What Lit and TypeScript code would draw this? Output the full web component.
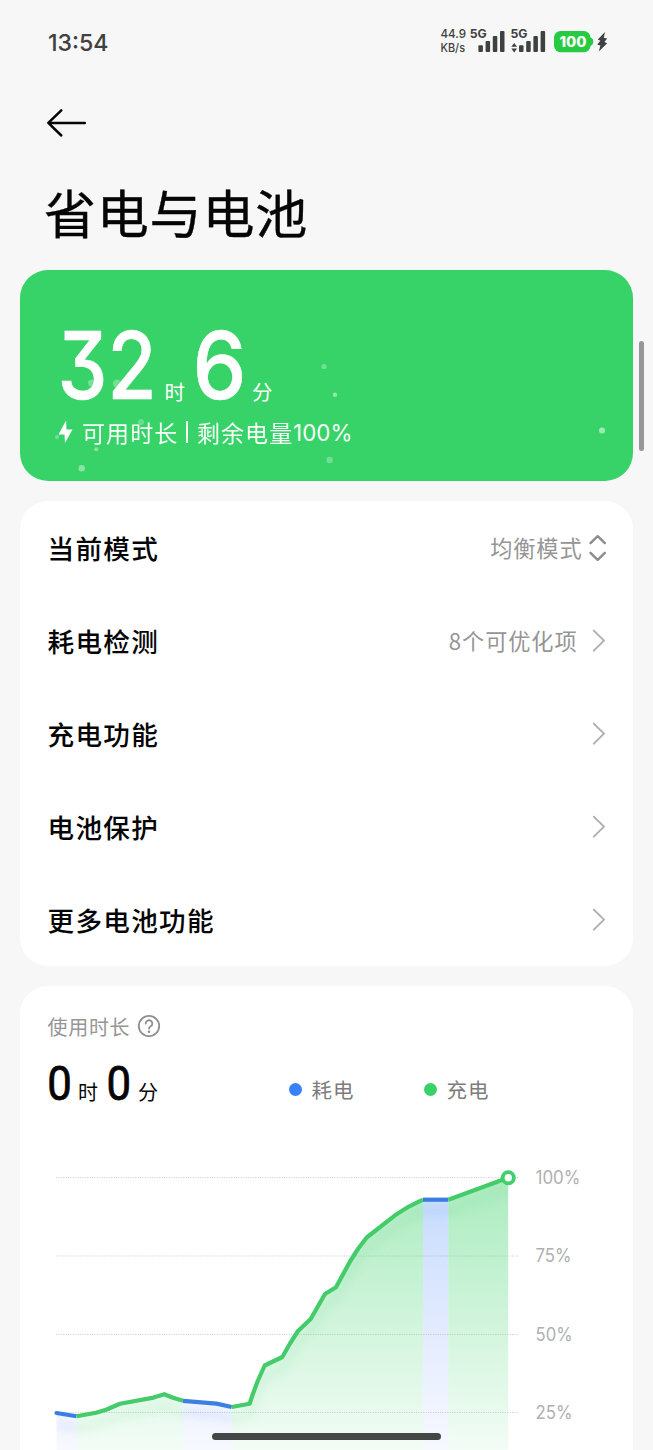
import { LitElement, html, svg, css } from "lit";
import { customElement } from "lit/decorators.js";

type Pt = [number, number];

// Battery level curve, split by whether the phone was draining or charging.
const SEGMENTS: { kind: "drain" | "charge"; pts: Pt[] }[] = [
  { kind: "drain", pts: [[56.5, 1413], [76.5, 1416.2]] },
  { kind: "charge", pts: [[76.5, 1416.2], [96, 1412.8], [106, 1409.8], [120, 1403.8], [153.5, 1397.6], [164.3, 1394.2], [173, 1397.7], [183, 1400.8]] },
  { kind: "drain", pts: [[183, 1400.8], [216.5, 1403.6], [231.7, 1407]] },
  {
    kind: "charge",
    pts: [[231.7, 1407], [249.6, 1403.8], [252.5, 1395], [257.7, 1381], [264.7, 1365.5], [282.3, 1357], [290, 1343.5], [298, 1331], [310.7, 1319], [325, 1294], [336, 1287.3], [350, 1261.5], [358.3, 1248.5], [366.7, 1237.5], [395, 1215.3], [409.3, 1206.3], [423, 1199.7]],
  },
  { kind: "drain", pts: [[423, 1199.7], [448.3, 1199.7]] },
  { kind: "charge", pts: [[448.3, 1199.7], [508.2, 1177.7]] },
];

const line = (pts: Pt[]) => "M" + pts.map((p) => p.join(" ")).join("L");
const area = (pts: Pt[]) => `${line(pts)}V1450H${pts[0][0]}Z`;

const GRID = [
  { label: "100%", y: 1177.5, w: 44 },
  { label: "75%", y: 1256, w: 35 },
  { label: "50%", y: 1334.5, w: 36 },
  { label: "25%", y: 1412.5, w: 36 },
];

const SPARKS = [
  [91.5, 383, 3.5, 0.3], [117, 383.5, 4, 0.3], [141, 422, 3, 0.25], [57, 437, 2, 0.3], [96.3, 449.3, 2, 0.4],
  [81.7, 468.3, 3.2, 0.4], [324, 366.5, 2.6, 0.3], [335, 394.7, 2.2, 0.45], [329.7, 460, 3.2, 0.28], [602, 430.4, 3, 0.5],
];

const ROWS = [
  { label: "当前模式", value: "均衡模式", icon: "updown" },
  { label: "耗电检测", value: "8个可优化项", icon: "next" },
  { label: "充电功能", value: "", icon: "next" },
  { label: "电池保护", value: "", icon: "next" },
  { label: "更多电池功能", value: "", icon: "next" },
];

@customElement("status-bar")
class StatusBar extends LitElement {
  static styles = css`
    :host { display: flex; justify-content: space-between; height: 84px; padding: 0 43px 0 48px; box-sizing: border-box; }
    svg { display: block; }
    text { font-family: Inter, "Noto Sans", sans-serif; fill: #3f4040; }
    .clock { font-size: 23.5px; font-weight: 500; }
    .rate { font-size: 11.8px; font-weight: 500; }
    .net { font-size: 12px; font-weight: 700; }
    .pct { font-size: 14.5px; font-weight: 800; fill: #fff; }
    .ink { fill: #3f4040; }
    .cell { fill: #27cb41; }
  `;
  render() {
    const bars = (x: number) =>
      [45.3, 41, 36, 31].map((y, i) => svg`<rect class="ink" x=${x + i * 7.2} y=${y} width="4.5" height=${52 - y} rx="1"/>`);
    return html`
      <svg width="64" height="84" viewBox="48 0 64 84">
        <text class="clock" x="48" y="51" textLength="60.5" lengthAdjust="spacingAndGlyphs">13:54</text>
      </svg>
      <svg width="170" height="84" viewBox="440 0 170 84">
        <text class="rate" x="440.5" y="38.3" textLength="25.5" lengthAdjust="spacingAndGlyphs">44.9</text>
        <text class="rate" x="440.5" y="52.3" textLength="24.5" lengthAdjust="spacingAndGlyphs">KB/s</text>
        <text class="net" x="469.8" y="38.2" textLength="17" lengthAdjust="spacingAndGlyphs">5G</text>
        <text class="net" x="510.5" y="38.2" textLength="17" lengthAdjust="spacingAndGlyphs">5G</text>
        ${bars(478.4)}${bars(519)}
        <path class="ink" d="M511.3 46.8L514.2 43l2.9 3.8zM511.3 48.6L514.2 52.4l2.9-3.8z"/>
        <rect class="cell" x="554" y="31" width="36.5" height="21.2" rx="6.5"/>
        <path class="cell" d="M590 37.5q3.3.6 3.3 4.2t-3.3 4.2z"/>
        <text class="pct" x="559.5" y="46.9" textLength="27" lengthAdjust="spacingAndGlyphs">100</text>
        <path class="ink" d="M605 32L597.8 39.6l2.6 1.2-3.2 3.6 3.2 1L598.8 51.5l8.4-8.2-2.8-1.2 2.8-3.6-3.4-.8z"/>
      </svg>`;
  }
}

@customElement("battery-hero")
class BatteryHero extends LitElement {
  static styles = css`
    :host { display: block; position: relative; height: 211px; border-radius: 28px; background: #38d368; overflow: hidden; color: #fff; font-family: "Noto Sans CJK SC", sans-serif; }
    svg { display: block; overflow: visible; flex: none; }
    .sparks { position: absolute; inset: 0; }
    .body { position: relative; display: flex; flex-direction: column; padding: 52px 0 0 34px; }
    .time { display: flex; align-items: flex-end; height: 90px; }
    .num text { font-family: Inter, sans-serif; font-feature-settings: "cv09"; font-size: 94px; font-weight: 500; fill: #fff; stroke: #fff; stroke-width: .6; }
    .unit { font-size: 20.5px; line-height: 30px; box-sizing: border-box; padding-bottom: 6px; white-space: nowrap; }
    .unit.h { padding-left: 8.5px; width: 38px; }
    .unit.m { padding-left: 6px; width: 34px; }
    .info { display: flex; align-items: center; height: 40px; }
    .note, .left { font-size: 23px; letter-spacing: 1.1px; line-height: 38px; padding-bottom: 1px; white-space: nowrap; opacity: .96; }
    .note { padding-left: 7px; }
    .bar { width: 2.5px; height: 22px; margin: 0 8.5px 0 7.5px; background: #f2fcf5; }
    .full text { font-family: Inter, sans-serif; font-size: 23.5px; fill: #f5fdf7; }
  `;
  render() {
    return html`
      <svg class="sparks" width="613" height="211" viewBox="20 270 613 211">
        ${SPARKS.map(([x, y, r, o]) => svg`<circle cx=${x} cy=${y} r=${r} fill="#fff" fill-opacity=${o}/>`)}
      </svg>
      <div class="body">
        <div class="time">
          <svg class="num" width="102" height="90" viewBox="54 322 102 90">
            <text x="57.5" y="399" textLength="99" lengthAdjust="spacingAndGlyphs">32</text>
          </svg>
          <span class="unit h">时</span>
          <svg class="num" width="52" height="90" viewBox="194 322 52 90">
            <text x="192.5" y="399" textLength="54" lengthAdjust="spacingAndGlyphs">6</text>
          </svg>
          <span class="unit m">分</span>
        </div>
        <div class="info">
          <svg width="21" height="28" viewBox="54 418 21 28"><path d="M66 420.5L58.5 434.5h6L65 443l7.5-13.5h-6z" fill="#fff"/></svg>
          <span class="note">可用时长</span><span class="bar"></span><span class="left">剩余电量</span>
          <svg class="full" width="62" height="28" viewBox="293 418 62 28">
            <text x="293" y="441" textLength="59.5" lengthAdjust="spacingAndGlyphs">100%</text>
          </svg>
        </div>
      </div>`;
  }
}

@customElement("settings-list")
class SettingsList extends LitElement {
  static styles = css`
    :host { display: block; border-radius: 28px; background: #fff; font-family: "Noto Sans CJK SC", sans-serif; }
    .row { display: flex; align-items: center; height: 93px; padding: 0 26px 0 27.5px; }
    .label { flex: 1; font-size: 26.6px; font-weight: 500; letter-spacing: 1.3px; line-height: 40px; color: #050505; }
    .value { font-size: 22.2px; letter-spacing: .9px; line-height: 38px; padding-bottom: 2px; color: #959595; }
    .value.next { margin-right: 13.5px; }
    .value.updown { margin-right: 5.5px; }
    svg { display: block; fill: none; stroke-linecap: round; stroke-linejoin: round; }
    .chev { stroke: #b0b0b0; stroke-width: 2; }
    .ud { stroke: #8c8c8c; stroke-width: 2.4; }
  `;
  render() {
    return ROWS.map((r) => html`
      <div class="row">
        <span class="label">${r.label}</span>
        ${r.value ? html`<span class="value ${r.icon}">${r.value}</span>` : ""}
        ${r.icon === "next"
          ? html`<svg width="16" height="26" viewBox="0 0 16 26"><path class="chev" d="M2.8 2.6L13 12.6L2.8 22.6"/></svg>`
          : html`<svg width="19" height="28" viewBox="0 0 19 28"><path class="ud" d="M2.5 9.2L9.7 2.2L16.9 9.2M2.5 18.8L9.7 25.8L16.9 18.8"/></svg>`}
      </div>`);
  }
}

@customElement("usage-card")
class UsageCard extends LitElement {
  static styles = css`
    :host { display: block; height: 464px; border-radius: 28px 28px 0 0; background: #fff; overflow: hidden; font-family: "Noto Sans CJK SC", sans-serif; }
    svg { display: block; overflow: visible; flex: none; }
    .head { display: flex; align-items: center; height: 42px; padding: 19px 0 0 27.5px; gap: 6.5px; }
    .cap { font-size: 20px; letter-spacing: .7px; line-height: 42px; padding-top: 1px; color: #969696; }
    .help { fill: none; stroke: #8f8f8f; stroke-width: 1.8; stroke-linecap: round; }
    .help .dot { fill: #8f8f8f; stroke: none; }
    .sum { display: flex; align-items: flex-end; height: 56px; padding-left: 27px; }
    .zero text { font-family: Roboto, sans-serif; font-size: 49px; font-weight: 400; fill: #050505; stroke: #050505; stroke-width: .8; }
    .unit { width: 27px; height: 25px; padding-left: 6px; box-sizing: border-box; font-size: 20px; line-height: 28px; color: #050505; white-space: nowrap; }
    .key { display: flex; align-items: center; height: 32px; margin-bottom: -2px; font-size: 20.5px; letter-spacing: .9px; color: #7c7c7c; }
    .key i { width: 13px; height: 13px; margin-right: 10px; border-radius: 50%; }
    .key.a { margin-left: 129.5px; width: 135px; }
    .drain i { background: #3782fa; }
    .charge i { background: #38d168; }
    .axis { font-family: Inter, sans-serif; font-size: 18px; fill: #b0b0b0; }
    .grid { stroke: #d2d5d2; stroke-width: 1; stroke-dasharray: 1.2 1.2; }
    .stroke { fill: none; stroke-width: 4.2; stroke-linejoin: round; }
    .cdrain { stroke: #3d7ee2; }
    .ccharge { stroke: #44cb6a; }
    .shade { fill: none; stroke-width: 7; stroke-opacity: .1; filter: blur(4px); }
  `;
  render() {
    return html`
      <div class="head">
        <span class="cap">使用时长</span>
        <svg class="help" width="24" height="24" viewBox="0 0 24 24">
          <circle cx="12" cy="12" r="10.2"/>
          <path d="M8.7 9.5a3.3 3.2 0 1 1 5 2.7c-1.2.8-1.7 1.2-1.7 2.5"/><circle class="dot" cx="12" cy="17.7" r="1.3"/>
        </svg>
      </div>
      <div class="sum">
        <svg class="zero" width="25" height="56" viewBox="47 1047 25 56"><text x="47.2" y="1100.3" textLength="24.6" lengthAdjust="spacingAndGlyphs">0</text></svg>
        <span class="unit">时</span>
        <svg class="zero" width="33" height="56" viewBox="99 1047 33 56"><text x="106.5" y="1100.3" textLength="24.6" lengthAdjust="spacingAndGlyphs">0</text></svg>
        <span class="unit">分</span>
        <span class="key drain a"><i></i>耗电</span>
        <span class="key charge"><i></i>充电</span>
      </div>
      <svg width="613" height="347" viewBox="20 1103 613 347">
        <defs>
          <linearGradient id="g" gradientUnits="userSpaceOnUse" x1="0" y1="1177" x2="0" y2="1450">
            <stop offset="0" stop-color="#38d168" stop-opacity=".43"/><stop offset="1" stop-color="#38d168" stop-opacity=".06"/>
          </linearGradient>
          <linearGradient id="b" gradientUnits="userSpaceOnUse" x1="0" y1="1177" x2="0" y2="1450">
            <stop offset="0" stop-color="#3782fa" stop-opacity=".3"/><stop offset="1" stop-color="#5f82fa" stop-opacity=".05"/>
          </linearGradient>
          <clipPath id="under">${SEGMENTS.map((s) => svg`<path d=${area(s.pts)}/>`)}</clipPath>
        </defs>
        ${GRID.map((g) => svg`
          <path class="grid" d="M56 ${g.y}H518"/>
          <text class="axis" x="535.5" y=${g.y + 6.2} textLength=${g.w + 1} lengthAdjust="spacingAndGlyphs">${g.label}</text>`)}
        ${SEGMENTS.map((s) => svg`<path d=${area(s.pts)} fill=${s.kind === "drain" ? "url(#b)" : "url(#g)"}/>`)}
        <g clip-path="url(#under)">
          ${SEGMENTS.map((s) => svg`<path class="shade c${s.kind}" transform="translate(0 12)" d=${line(s.pts)}/>`)}
        </g>
        ${SEGMENTS.map((s) => svg`<path class="stroke c${s.kind}" d=${line(s.pts)}/>`)}
        <circle cx="56.5" cy="1413" r="2.1" fill="#3d7ee2"/>
        <circle cx="508.3" cy="1177.7" r="5.6" fill="#fff" stroke="#3fd06b" stroke-width="3.8"/>
      </svg>`;
  }
}

@customElement("app-root")
class AppRoot extends LitElement {
  static styles = css`
    :host { display: block; position: relative; width: 653px; height: 1450px; overflow: hidden; background: #f7f7f7; }
    .back { display: block; height: 78px; padding-left: 44px; }
    h1 { margin: 0; height: 108px; padding-left: 44px; font: 400 52px/99px "Noto Sans CJK SC", sans-serif; letter-spacing: .8px; color: #050505; box-sizing: border-box; -webkit-text-stroke: .4px #050505; }
    .stack { display: flex; flex-direction: column; gap: 20px; padding: 0 20px; }
    .scroll { position: absolute; right: 9px; top: 341px; width: 5px; height: 110px; border-radius: 3px; background: #979797; }
    .home { position: absolute; left: 212px; top: 1432.5px; width: 229px; height: 7px; border-radius: 4px; background: #454746; }
  `;
  render() {
    return html`
      <status-bar></status-bar>
      <svg class="back" width="46" height="78" viewBox="44 84 46 78">
        <path d="M61.3 110.3L48.3 122.9L61.3 135.5M48.5 122.9H84.8" fill="none" stroke="#050505" stroke-width="2.5" stroke-linecap="round" stroke-linejoin="round"/>
      </svg>
      <h1>省电与电池</h1>
      <div class="stack">
        <battery-hero></battery-hero>
        <settings-list></settings-list>
        <usage-card></usage-card>
      </div>
      <div class="scroll"></div>
      <div class="home"></div>`;
  }
}
